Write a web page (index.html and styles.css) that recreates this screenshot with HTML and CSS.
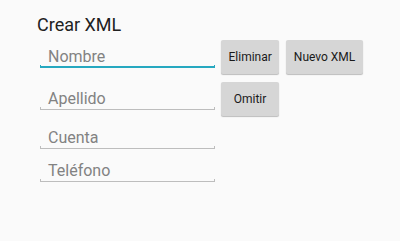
FILE: index.html
```html
<!DOCTYPE html>
<html lang="es">
<head>
<meta charset="utf-8">
<title>Crear XML</title>
<link rel="stylesheet" href="styles.css">
</head>
<body>
<div class="screen">
  <h1 class="title">Crear XML</h1>
  <div class="form">
    <div class="row row-1">
      <div class="field focused">
        <div class="hint">Nombre</div>
        <div class="line"></div>
      </div>
      <div class="buttons">
        <button class="btn">Eliminar</button>
        <button class="btn">Nuevo XML</button>
      </div>
    </div>
    <div class="row row-2">
      <div class="field">
        <div class="hint">Apellido</div>
        <div class="line"></div>
      </div>
      <div class="buttons">
        <button class="btn">Omitir</button>
      </div>
    </div>
    <div class="row row-3">
      <div class="field">
        <div class="hint">Cuenta</div>
        <div class="line"></div>
      </div>
    </div>
    <div class="row row-4">
      <div class="field">
        <div class="hint">Teléfono</div>
        <div class="line"></div>
      </div>
    </div>
  </div>
</div>
</body>
</html>
```
FILE: styles.css
```css
html, body {
  margin: 0;
  padding: 0;
  background: #fafafa;
}

.screen {
  width: 400px;
  height: 241px;
  font-family: Roboto, "Noto Sans", "Liberation Sans", sans-serif;
  overflow: hidden;
}

.title {
  margin: 14px 0 0 37px;
  font-size: 18px;
  line-height: 21px;
  font-weight: 400;
  color: #212121;
}

.form {
  margin-left: 40px;
}

.row {
  display: flex;
  align-items: flex-start;
  gap: 6px;
}

.field {
  width: 175px;
  flex: none;
}

.hint {
  padding-left: 8px;
  font-size: 16px;
  line-height: 19px;
  color: #828282;
}

.line {
  margin-top: -1px;
  height: 2px;
  border: 1px solid #bdbdbd;
  border-top: none;
}

.focused .line {
  height: 1px;
  border-color: #26a8c0;
  border-bottom-width: 2px;
}

.buttons {
  display: flex;
  gap: 7px;
}

.btn {
  min-width: 58px;
  height: 34px;
  padding: 0 7.5px;
  border: none;
  border-radius: 2px;
  background: #d6d6d6;
  box-shadow: 0 1px 1px rgba(0, 0, 0, 0.25);
  font-family: Roboto, "Noto Sans", "Liberation Sans", sans-serif;
  font-size: 12px;
  color: #1a1a1a;
}

.row-1 .field { margin-top: 12px; }
.row-1 .buttons { margin: 5px 0 4px; }

.row-2 .field { margin-top: 11px; }
.row-2 .buttons { margin: 4px 0 4px; }

.row-3 .field { margin-top: 8px; }

.row-4 .field { margin-top: 12px; }
```
